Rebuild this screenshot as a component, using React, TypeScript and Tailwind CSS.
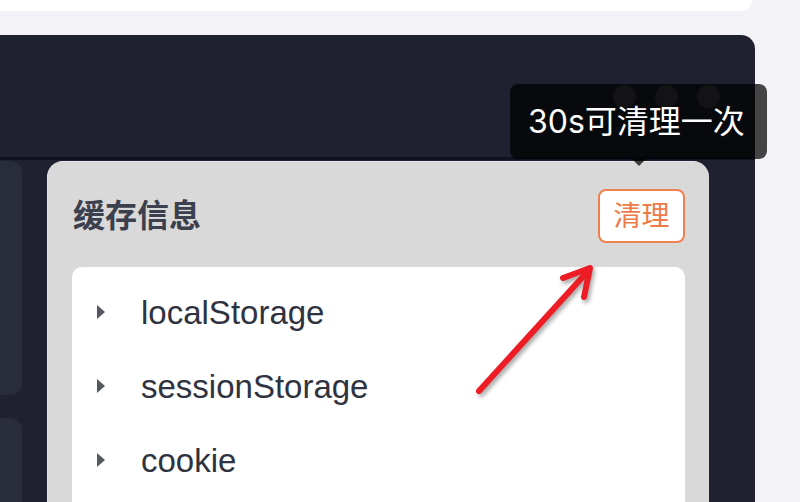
import React from "react";

const font = { fontFamily: 'Inter, "Noto Sans CJK SC", sans-serif' };
const listFont = { fontFamily: '"Liberation Sans", "Noto Sans CJK SC", sans-serif' };

function Row({ label }: { label: string }) {
  return (
    <div className="flex h-[74px] items-center pl-[25px]">
      <svg width="8" height="14" viewBox="0 0 8 14" className="shrink-0">
        <path d="M0 0 L8 7 L0 14 Z" fill="#55585f" />
      </svg>
      <span className="ml-[36px] text-[33px] leading-none text-[#2f3241]" style={listFont}>
        {label}
      </span>
    </div>
  );
}

export default function App() {
  return (
    <div className="relative h-[502px] w-[800px] overflow-hidden bg-[#f3f3f7]" style={font}>
      <div className="h-[11px] w-[752px] rounded-br-[12px] bg-white" />
      <div className="mt-[24px] flex h-[467px] w-[755px] flex-col rounded-tr-[14px] bg-[#1f2130]">
        <div className="flex h-[122px] shrink-0 justify-end gap-[19px] pr-[35px] pt-[50px]">
          <div className="h-[23px] w-[23px] rounded-full bg-[#44464f]" />
          <div className="h-[23px] w-[23px] rounded-full bg-[#44464f]" />
          <div className="h-[23px] w-[23px] rounded-full bg-[#44464f]" />
        </div>
        <div className="h-[3px] shrink-0 bg-[#0f1220]" />
        <div className="flex flex-1 gap-[25px] pt-[1px]">
          <div className="flex w-[22px] flex-col gap-[23px]">
            <div className="h-[234px] rounded-r-[12px] bg-[#292c3a]" />
            <div className="h-[100px] rounded-r-[12px] bg-[#292c3a]" />
          </div>
          <div className="flex w-[662px] flex-col rounded-t-[16px] border-l border-t border-[#e6e6e8] bg-[#d9d9d9] px-[24px] pt-[27px]">
            <div className="flex items-center justify-between">
              <span className="pl-[1px] text-[32px] font-bold leading-none text-[#3b3f4e]">缓存信息</span>
              <div className="flex h-[54px] w-[87px] items-center justify-center rounded-[8px] border-2 border-[#f0804f] bg-white text-[28px] leading-none text-[#ee7a48]">
                清理
              </div>
            </div>
            <div className="mt-[24px] flex-1 rounded-t-[10px] bg-white pt-[8px]">
              <Row label="localStorage" />
              <Row label="sessionStorage" />
              <Row label="cookie" />
            </div>
          </div>
        </div>
      </div>

      <div className="absolute left-[510px] top-[84px] flex h-[75px] w-[257px] items-center rounded-[8px] bg-[rgba(0,0,0,0.72)] pl-[18px] text-[32px] leading-none text-white">
        30s可清理一次
        <div className="absolute left-[122px] top-[75px] h-0 w-0 border-x-[7px] border-t-[7px] border-x-transparent border-t-[rgba(0,0,0,0.72)]" />
      </div>

      <svg
        className="absolute left-0 top-0"
        width="800"
        height="502"
        viewBox="0 0 800 502"
        style={{ filter: "drop-shadow(2px 3px 2px rgba(0,0,0,0.35))" }}
      >
        <g stroke="#ee1c25" strokeWidth="6" strokeLinecap="round" strokeLinejoin="round" fill="none">
          <path d="M479 391 L589 270" />
          <path d="M563 278 L590 268 L584 297" />
        </g>
      </svg>
    </div>
  );
}
